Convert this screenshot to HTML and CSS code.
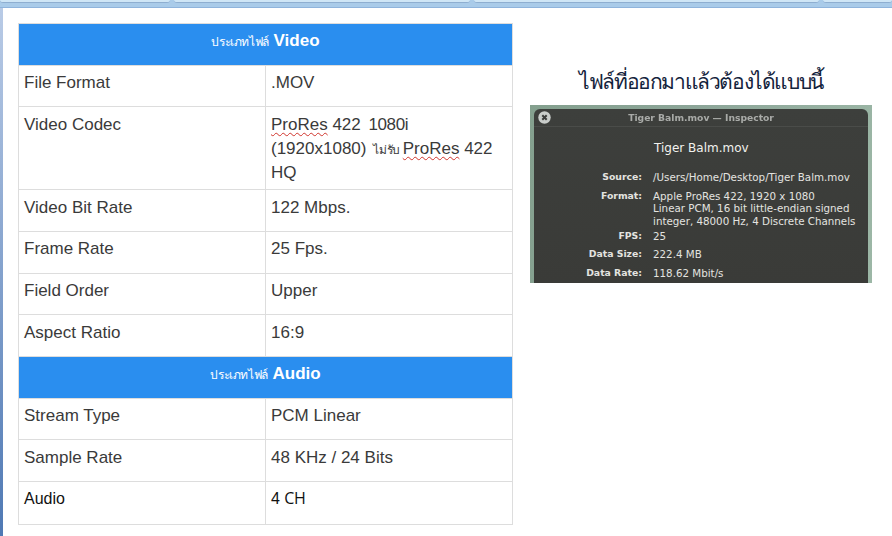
FILE: index.html
```html
<!DOCTYPE html>
<html lang="th">
<head>
<meta charset="utf-8">
<title>ประเภทไฟล์</title>
<link rel="stylesheet" href="styles.css">
</head>
<body>
<div class="topbar">
  <div class="tab tab-a"></div>
  <div class="tab tab-b"></div>
  <div class="tab tab-c"></div>
  <div class="tab tab-d"></div>
</div>
<div class="shell">
  <div class="rail"></div>
  <main class="content">
    <table class="spec">
      <colgroup><col class="col-a"><col class="col-b"></colgroup>
      <tbody>
        <tr class="head"><th colspan="2"><span class="th-sm">ประเภทไฟล์</span> Video</th></tr>
        <tr><td>File Format</td><td>.MOV</td></tr>
        <tr><td>Video Codec</td><td><span class="spell">ProRes</span> 422 <span class="gap">1080i</span><br>(1920x1080) <span class="th-note">ไม่รับ</span> <span class="spell">ProRes</span> 422<br>HQ</td></tr>
        <tr><td>Video Bit Rate</td><td>122 Mbps.</td></tr>
        <tr><td>Frame Rate</td><td>25 Fps.</td></tr>
        <tr><td>Field Order</td><td>Upper</td></tr>
        <tr><td>Aspect Ratio</td><td>16:9</td></tr>
        <tr class="head"><th colspan="2"><span class="th-sm">ประเภทไฟล์</span> Audio</th></tr>
        <tr><td>Stream Type</td><td>PCM Linear</td></tr>
        <tr><td>Sample Rate</td><td>48 KHz / 24 Bits</td></tr>
        <tr class="dark"><td>Audio</td><td>4 <span class="ch">CH</span></td></tr>
      </tbody>
    </table>
    <aside class="side">
      <h2 class="side-title">ไฟล์ที่ออกมาแล้วต้องได้แบบนี้</h2>
      <div class="shot">
        <div class="inspector">
          <div class="titlebar">
            <span class="close"><svg width="13" height="13" viewBox="0 0 13 13"><circle cx="6.5" cy="6.5" r="6.2" fill="#c9cdca"/><path d="M4.3 4.3l4.4 4.4M8.7 4.3l-4.4 4.4" stroke="#3a3c3a" stroke-width="2"/></svg></span>
            <span class="wintitle">Tiger Balm.mov — Inspector</span>
          </div>
          <div class="filename">Tiger Balm.mov</div>
          <dl class="info">
            <dt>Source:</dt><dd>/Users/Home/Desktop/Tiger Balm.mov</dd>
            <dt>Format:</dt><dd class="multi">Apple ProRes 422, 1920 x 1080<br>Linear PCM, 16 bit little-endian signed<br>integer, 48000 Hz, 4 Discrete Channels</dd>
            <dt>FPS:</dt><dd>25</dd>
            <dt>Data Size:</dt><dd>222.4 MB</dd>
            <dt>Data Rate:</dt><dd>118.62 Mbit/s</dd>
          </dl>
        </div>
      </div>
    </aside>
  </main>
</div>
</body>
</html>
```
FILE: styles.css
```css
* { box-sizing: border-box; }
html, body { margin: 0; height: 100%; overflow: hidden; }
body {
  background: #fff;
  font-family: "Liberation Sans", Arial, sans-serif;
  color: #3a3a3a;
  display: flex;
  flex-direction: column;
}
.topbar {
  height: 8px;
  flex: none;
  display: flex;
  gap: 4px;
  background: #a9cbe9;
  border-bottom: 1px solid #8fb4dc;
  overflow: hidden;
}
.tab {
  height: 3px;
  background: #cfe6f6;
  border-bottom: 1px solid #8eaed0;
  border-radius: 0 0 3px 3px;
}
.tab-a { width: 170px; }
.tab-b { width: 296px; }
.tab-c { width: 345px; }
.tab-d { flex: 1; }
.shell { flex: 1; display: flex; min-height: 0; }
.rail {
  width: 3px;
  flex: none;
  background: linear-gradient(#b9cbe6, #4f79b4);
}
.content {
  flex: 1;
  display: flex;
  align-items: flex-start;
  padding: 15px 0 0 15px;
}
.spec {
  width: 494px;
  table-layout: fixed;
  border-collapse: collapse;
  font-size: 17px;
  line-height: 24px;
  flex: none;
}
.col-a { width: 247px; }
.col-b { width: 247px; }
.spec td, .spec th { border: 1px solid #ddd; height: 41.67px; }
.spec td {
  padding: 5.4px 5px 4.6px;
  vertical-align: top;
}
.spec tr.head th {
  background: #2a8eef;
  color: #fff;
  font-size: 17px;
  font-weight: 700;
  line-height: 24px;
  text-align: center;
  vertical-align: top;
  padding: 5px 6px;
  border-color: #ddd;
}
.th-sm { font-size: 12px; font-weight: 400; letter-spacing: -0.4px; line-height: 1; }
.th-note { font-size: 12px; letter-spacing: -0.3px; line-height: 1; margin: 0 -2px 0 2px; }
.gap { margin-left: 3px; letter-spacing: -0.4px; }
.spell {
  text-decoration: underline wavy #d0342c 1px;
  text-underline-offset: 2px;
}
.dark td { color: #111; font-size: 16px; height: 43px; }
.ch { font-family: "Open Sans", sans-serif; font-size: 16px; letter-spacing: -0.5px; line-height: 1; }
.side {
  width: 342px;
  margin-left: 17px;
  display: flex;
  flex-direction: column;
  flex: none;
}
.side-title {
  margin: 41px 0 0;
  height: 41px;
  font-size: 21px;
  font-weight: 400;
  letter-spacing: -1.4px;
  line-height: 36px;
  color: #14233c;
  text-align: center;
}
.shot {
  height: 178px;
  padding: 4px 4px 0;
  background: linear-gradient(100deg, #84a08e, #8ca598 45%, #9cb7a6);
}
.inspector {
  height: 100%;
  border-radius: 6px 6px 0 0;
  background: linear-gradient(#3d3f3c, #3a3b38);
  color: #e4e4e0;
  font-family: "DejaVu Sans", sans-serif;
  font-size: 10.3px;
  filter: blur(0.4px);
}
.titlebar {
  height: 18px;
  position: relative;
  display: flex;
  align-items: center;
  justify-content: center;
  border-bottom: 1px solid #4a4c49;
  color: #a9aba8;
  font-weight: 700;
  font-size: 9.2px;
}
.close { position: absolute; left: 4px; top: 2px; line-height: 0; }
.filename {
  margin: 11px 0 0 120px;
  font-size: 12px;
  font-weight: 400;
  color: #f2f2ee;
  line-height: 20px;
}
.info {
  margin: 14px 0 0;
  display: grid;
  grid-template-columns: 108px 1fr;
  column-gap: 11px;
  line-height: 10px;
}
.info dt { font-weight: 700; font-size: 9.3px; text-align: right; margin-bottom: 8.5px; }
.info dd { margin: 0; white-space: nowrap; }
.info dd.multi { line-height: 12.5px; margin-top: -1px; margin-bottom: 3.5px; }
```
